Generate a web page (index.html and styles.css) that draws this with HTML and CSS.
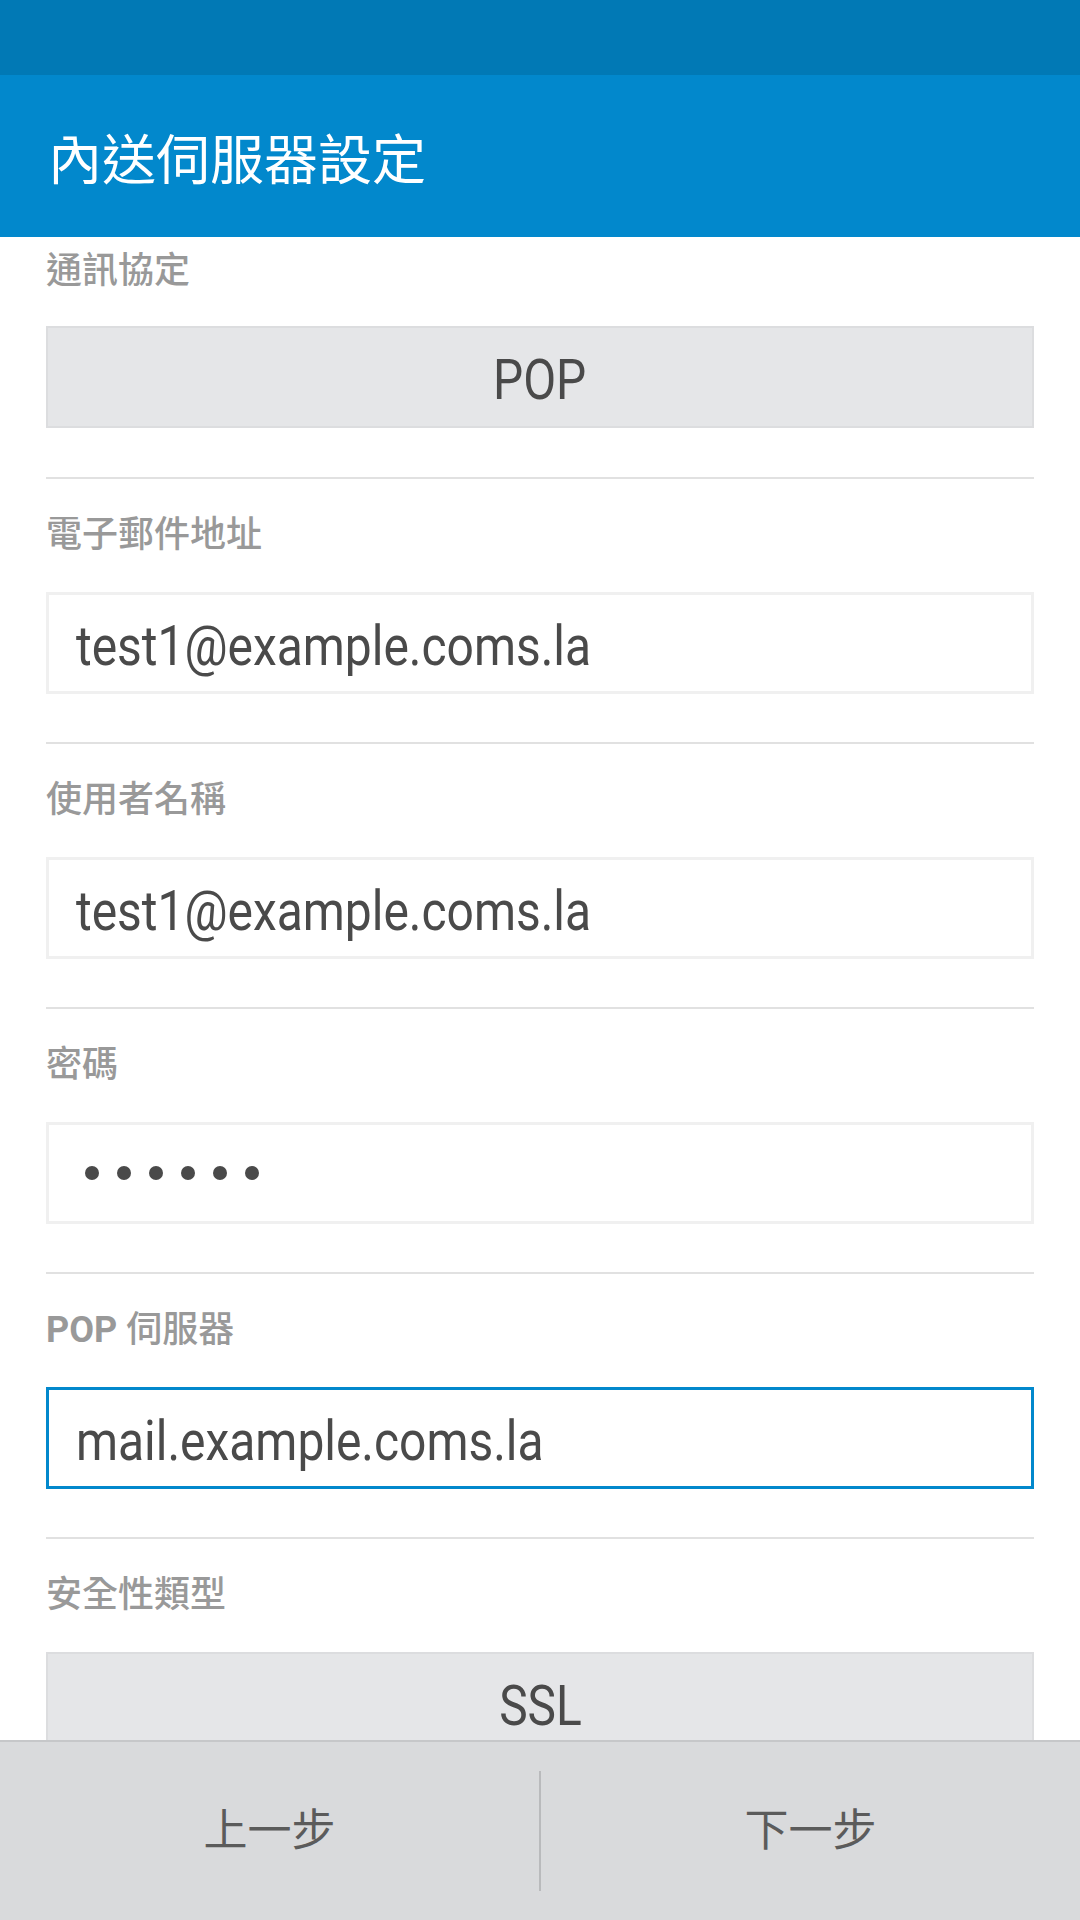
FILE: index.html
```html
<!DOCTYPE html>
<html lang="zh-Hant">
<head>
<meta charset="utf-8">
<title>內送伺服器設定</title>
<link rel="stylesheet" href="styles.css">
</head>
<body>
<div class="screen">
  <div class="statusbar"></div>
  <header class="appbar"><h1 class="title">內送伺服器設定</h1></header>
  <main class="content">
    <section class="field first">
      <div class="label">通訊協定</div>
      <div class="select"><span class="cond">POP</span></div>
    </section>
    <section class="field">
      <div class="label">電子郵件地址</div>
      <div class="input"><span class="value">test1@example.coms.la</span></div>
    </section>
    <section class="field">
      <div class="label">使用者名稱</div>
      <div class="input"><span class="value">test1@example.coms.la</span></div>
    </section>
    <section class="field">
      <div class="label">密碼</div>
      <div class="input pw" aria-label="密碼">
        <span class="dot"></span><span class="dot"></span><span class="dot"></span><span class="dot"></span><span class="dot"></span><span class="dot"></span>
      </div>
    </section>
    <section class="field">
      <div class="label"><span class="latin">POP</span> 伺服器</div>
      <div class="input focus"><span class="value">mail.example.coms.la</span></div>
    </section>
    <section class="field">
      <div class="label">安全性類型</div>
      <div class="select"><span class="cond">SSL</span></div>
    </section>
  </main>
  <footer class="footer">
    <div class="btn">上一步</div>
    <div class="sep"></div>
    <div class="btn">下一步</div>
  </footer>
</div>
</body>
</html>
```

FILE: styles.css
```css
* { box-sizing: border-box; }
html, body { margin: 0; padding: 0; }
body {
  background: #ffffff;
  font-family: Roboto, "Noto Sans CJK TC", sans-serif;
}
.screen {
  width: 1080px;
  height: 1920px;
  display: flex;
  flex-direction: column;
  overflow: hidden;
}
.statusbar {
  height: 75px;
  flex: none;
  background: #0179b5;
}
.appbar {
  height: 162px;
  flex: none;
  background: #0288cc;
  display: flex;
  align-items: center;
  padding: 2px 0 0 48px;
}
.title {
  margin: 0;
  font-family: "Noto Sans CJK TC", sans-serif;
  font-weight: 400;
  font-size: 54px;
  line-height: 54px;
  color: #ffffff;
}
.content {
  flex: 1;
  min-height: 0;
  overflow: hidden;
  padding: 0 46px;
}
.field {
  padding: 36px 0 48px;
  border-bottom: 2px solid #e1e1e1;
}
.field.first {
  padding-top: 14px;
  padding-bottom: 49px;
}
.label {
  height: 40px;
  line-height: 40px;
  margin-bottom: 37px;
  font-family: Roboto, "Noto Sans CJK TC", sans-serif;
  font-size: 36px;
  font-weight: 500;
  color: #999999;
  white-space: nowrap;
}
.field.first .label {
  margin-bottom: 35px;
}
.label .latin {
  font-weight: 700;
}
.select {
  height: 102px;
  background: #e5e6e8;
  border: 2px solid #dcdddf;
  display: flex;
  align-items: center;
  justify-content: center;
  padding-top: 5px;
}
.cond {
  display: inline-block;
  font-family: Roboto, sans-serif;
  font-size: 55px;
  line-height: 66px;
  color: #4a4a4a;
  transform: scaleX(0.87);
  transform-origin: center center;
  white-space: nowrap;
}
.input {
  height: 102px;
  background: #ffffff;
  border: 3px solid #f0f0f0;
  display: flex;
  align-items: center;
  padding: 5px 0 0 27px;
}
.input.focus {
  border-color: #0288cc;
}
.value {
  display: inline-block;
  font-family: Roboto, sans-serif;
  font-size: 56px;
  line-height: 66px;
  color: #4a4a4a;
  transform: scaleX(0.856);
  transform-origin: left center;
  white-space: nowrap;
}
.input.pw {
  padding: 0 0 0 36px;
  gap: 18px;
}
.dot {
  width: 14px;
  height: 14px;
  border-radius: 50%;
  background: #4a4a4a;
}
.footer {
  height: 180px;
  flex: none;
  background: #d9dadc;
  border-top: 2px solid #c6c7c9;
  display: flex;
  align-items: center;
}
.btn {
  flex: 1;
  height: 100%;
  display: flex;
  align-items: center;
  justify-content: center;
  padding-bottom: 8px;
  font-family: "Noto Sans CJK TC", sans-serif;
  font-size: 44px;
  color: #5b5b5b;
}
.sep {
  width: 2px;
  height: 120px;
  flex: none;
  background: #b9babc;
}
```
